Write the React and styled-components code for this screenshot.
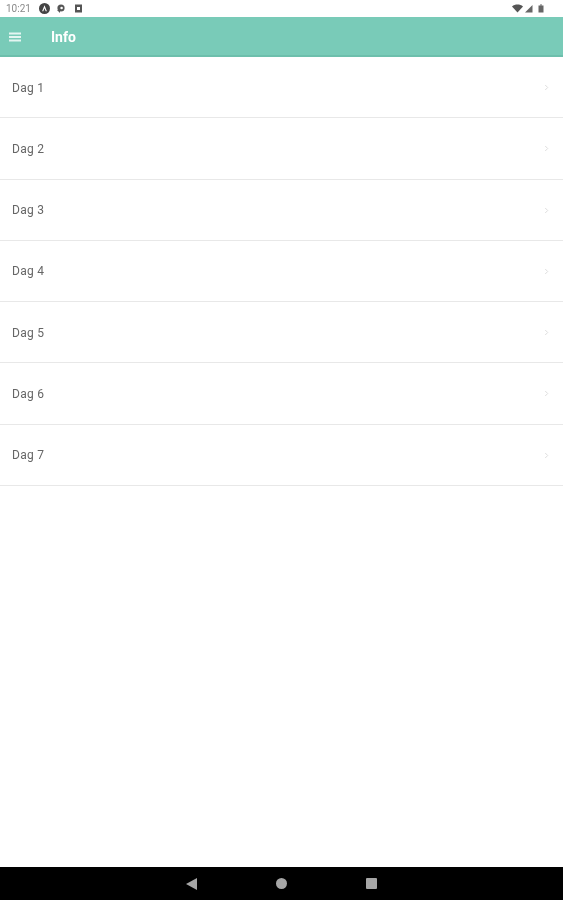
import React from 'react'
import styled, { createGlobalStyle } from 'styled-components'

const Global = createGlobalStyle`
  html, body { margin: 0; padding: 0; background: #fff; }
  body { font-family: Roboto, "Liberation Sans", sans-serif; }
`

const Screen = styled.div`
  width: 563px;
  height: 900px;
  display: flex;
  flex-direction: column;
  overflow: hidden;
  background: #fff;
`

const StatusBar = styled.div`
  height: 17px;
  display: flex;
  align-items: center;
  padding: 0 19px 0 6px;
  background: #fff;
  box-sizing: border-box;
`

const Clock = styled.span`
  font-size: 10px;
  color: #8a8a8a;
  width: 33px;
  filter: blur(0.4px);
`

const StatusIcons = styled.div`
  display: flex;
  align-items: center;
  gap: 6px;
  filter: blur(0.4px);
`

const Spacer = styled.div`
  flex: 1;
`

const Toolbar = styled.header`
  height: 36px;
  display: flex;
  align-items: center;
  background: #79cbb8;
  border-bottom: 2px solid #6dbfac;
  padding: 2px 0 0 9px;
`

const Title = styled.h1`
  margin: 0 0 0 30px;
  font-size: 14px;
  font-weight: 700;
  color: #fff;
  filter: blur(0.3px);
`

const List = styled.ul`
  list-style: none;
  margin: 0;
  padding: 0;
`

const Row = styled.li`
  height: 61.25px;
  display: flex;
  align-items: center;
  justify-content: space-between;
  padding: 1px 14px 0 12px;
  box-sizing: border-box;
  border-bottom: 1px solid #e8e8e8;
`

const Label = styled.span`
  font-size: 12px;
  color: #666;
  letter-spacing: 0.25px;
  filter: blur(0.35px);
`

const Content = styled.main`
  flex: 1;
`

const NavBar = styled.nav`
  height: 33px;
  background: #000;
  display: flex;
  align-items: center;
  justify-content: center;
  gap: 79px;
  filter: blur(0.5px);
`

function Chevron() {
  return (
    <svg width="5" height="7" viewBox="0 0 5 7">
      <path d="M1.2 1l2.5 2.5-2.5 2.5" fill="none" stroke="#dedede" strokeWidth="1" />
    </svg>
  )
}

function Menu() {
  return (
    <svg width="12" height="10" viewBox="0 0 12 10">
      <path d="M0 0.5h12v2h-12zM0 4h12v2h-12zM0 7.5h12v2h-12z" fill="#e4f5f1" />
    </svg>
  )
}

const days = [1, 2, 3, 4, 5, 6, 7]

export default function App() {
  return (
    <Screen>
      <Global />
      <StatusBar>
        <Clock>10:21</Clock>
        <StatusIcons>
          <svg width="11" height="11" viewBox="0 0 11 11">
            <circle cx="5.5" cy="5.5" r="5.5" fill="#444" />
            <path d="M5.5 2.2l2.4 6h-1.2l-1.2-3-1.2 3h-1.2z" fill="#fff" />
          </svg>
          <svg width="10" height="9" viewBox="0 0 10 9">
            <circle cx="5" cy="4" r="3.6" fill="#555" />
            <circle cx="5.6" cy="4" r="1.3" fill="#fff" />
            <path d="M1 6h3v3z" fill="#555" />
          </svg>
          <svg width="11" height="9" viewBox="0 0 11 9">
            <rect x="3" y="0.5" width="7" height="8" fill="#555" />
            <rect x="5" y="3" width="3" height="3" fill="#fff" />
          </svg>
        </StatusIcons>
        <Spacer />
        <StatusIcons>
          <svg width="35" height="9" viewBox="0 0 35 9">
            <path d="M3 2.5c3-2.6 8-2.6 11 0l-5.5 6z" fill="#555" />
            <path d="M16 8.5l7.5-7.5v7.5z" fill="#666" />
            <rect x="29.5" y="1.5" width="5" height="7" fill="#666" />
            <rect x="31" y="0.5" width="2" height="1" fill="#666" />
          </svg>
        </StatusIcons>
      </StatusBar>
      <Toolbar>
        <Menu />
        <Title>Info</Title>
      </Toolbar>
      <Content>
        <List>
          {days.map((d) => (
            <Row key={d}>
              <Label>Dag {d}</Label>
              <Chevron />
            </Row>
          ))}
        </List>
      </Content>
      <NavBar>
        <svg width="11" height="12" viewBox="0 0 11 12">
          <path d="M11 0v12L0 6z" fill="#a6a6a6" />
        </svg>
        <svg width="11" height="11" viewBox="0 0 11 11">
          <circle cx="5.5" cy="5.5" r="5.5" fill="#a6a6a6" />
        </svg>
        <svg width="11" height="11" viewBox="0 0 11 11">
          <rect width="11" height="11" rx="1" fill="#a6a6a6" />
        </svg>
      </NavBar>
    </Screen>
  )
}
